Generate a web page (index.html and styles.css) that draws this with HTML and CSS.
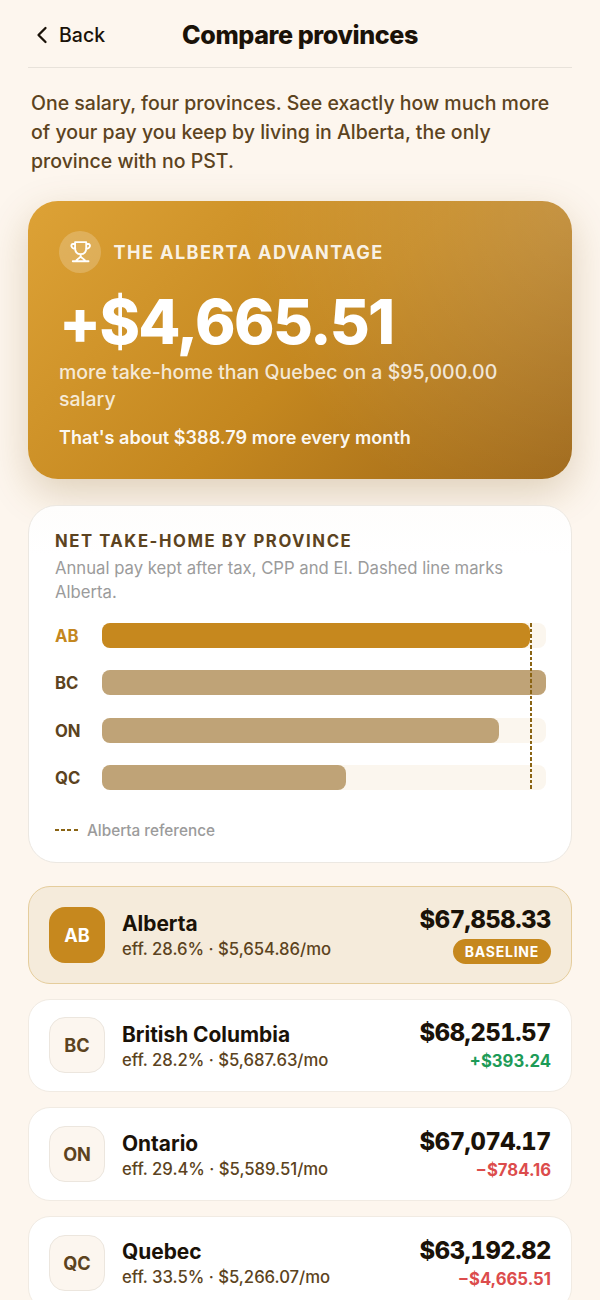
FILE: index.html
```html
<!DOCTYPE html>
<html lang="en">
<head>
<meta charset="utf-8">
<title>Compare provinces</title>
<link rel="stylesheet" href="styles.css">
</head>
<body>
<main class="screen">
  <header class="topbar">
    <div class="back"><svg class="chevron" viewBox="0 0 12 18"><path d="M9.500 2 2.500 9l7 7"/></svg><span>Back</span></div>
    <h1 class="title">Compare provinces</h1>
  </header>
  <p class="intro">One salary, four provinces. See exactly how much more<br>of your pay you keep by living in Alberta, the only<br>province with no PST.</p>

  <section class="hero">
    <div class="hero-head">
      <span class="trophy"><svg viewBox="0 0 24 24"><path d="M6.800 3h10.700v5.800c0 3.500-2 5.700-5.350 5.700S6.800 12.300 6.800 8.800zM6.800 4.800H4.700c-2.200 0-2.200 4.600 2.300 4.600M17.500 4.800h2.100c2.200 0 2.200 4.600-2.300 4.600M12.150 14.500v1.800M7.600 21.400c.3-2.600 4.550-2.900 4.550-5.100 0 2.200 4.250 2.500 4.550 5.100M4.600 21.400h15.100"/></svg></span>
      <span class="hero-label">THE ALBERTA ADVANTAGE</span>
    </div>
    <div class="hero-amount">+$4,665.51</div>
    <p class="hero-sub">more take-home than Quebec on a $95,000.00<br>salary</p>
    <p class="hero-month">That's about $388.79 more every month</p>
  </section>

  <section class="chart">
    <h2 class="chart-title">NET TAKE-HOME BY PROVINCE</h2>
    <p class="chart-sub">Annual pay kept after tax, CPP and EI. Dashed line marks<br>Alberta.</p>
    <div class="plot">
      <div class="codes"><span class="code active">AB</span><span class="code">BC</span><span class="code">ON</span><span class="code">QC</span></div>
      <div class="bars">
        <div class="track"><div class="fill active" style="width:96.5%"></div></div>
        <div class="track"><div class="fill" style="width:100%"></div></div>
        <div class="track"><div class="fill" style="width:89.5%"></div></div>
        <div class="track"><div class="fill" style="width:55%"></div></div>
        <div class="marker" style="left:96.5%"></div>
      </div>
    </div>
    <div class="legend"><span class="dash"></span><span>Alberta reference</span></div>
  </section>

  <section class="list">
    <article class="row base">
      <span class="badge">AB</span>
      <div class="info"><div class="name">Alberta</div><div class="detail">eff. 28.6% · $5,654.86/mo</div></div>
      <div class="figures"><div class="net">$67,858.33</div><div class="pill">BASELINE</div></div>
    </article>
    <article class="row">
      <span class="badge">BC</span>
      <div class="info"><div class="name">British Columbia</div><div class="detail">eff. 28.2% · $5,687.63/mo</div></div>
      <div class="figures"><div class="net">$68,251.57</div><div class="delta up">+$393.24</div></div>
    </article>
    <article class="row">
      <span class="badge">ON</span>
      <div class="info"><div class="name">Ontario</div><div class="detail">eff. 29.4% · $5,589.51/mo</div></div>
      <div class="figures"><div class="net">$67,074.17</div><div class="delta down">−$784.16</div></div>
    </article>
    <article class="row">
      <span class="badge">QC</span>
      <div class="info"><div class="name">Quebec</div><div class="detail">eff. 33.5% · $5,266.07/mo</div></div>
      <div class="figures"><div class="net">$63,192.82</div><div class="delta down">−$4,665.51</div></div>
    </article>
  </section>
</main>
</body>
</html>
```

FILE: styles.css
```css
* { box-sizing: border-box; margin: 0; padding: 0; }
html { background: #fdf6ee; }
body { height: 1300px; overflow: hidden; font-family: Inter, "Liberation Sans", sans-serif; color: #1a1208; white-space: nowrap; }
.screen { padding: 0 28px; }

.topbar { display: grid; grid-template-columns: 1fr auto 1fr; align-items: center; height: 68px; padding-top: 3px; border-bottom: 1px solid #e8e2da; }
.back { display: flex; align-items: center; gap: 11px; padding-left: 8px; font-size: 19.5px; font-weight: 500; }
.chevron { width: 12px; height: 18px; fill: none; stroke: #1a1208; stroke-width: 2.3; stroke-linecap: round; stroke-linejoin: round; }
.title { font-size: 25.1px; font-weight: 800; letter-spacing: -0.4px; }

.intro { padding: 20.5px 3px 0; font-size: 19.5px; line-height: 29.2px; font-weight: 500; color: #5c4320; }

.hero { height: 278px; margin-top: 24.5px; padding: 30px 31px; border-radius: 30px; color: #fff;
  background: radial-gradient(circle at 100% 0, rgba(255,255,255,.17), rgba(255,255,255,0) 330px), linear-gradient(135deg, #dda236 0%, #c4871f 53%, #9f6819 100%);
  box-shadow: 0 14px 40px rgba(122,82,15,.23); }
.hero-head { display: flex; align-items: center; gap: 12.5px; height: 42px; }
.trophy { display: flex; align-items: center; justify-content: center; width: 42px; height: 42px; border-radius: 50%; background: rgba(255,255,255,.2); }
.trophy svg { width: 25px; height: 25px; fill: none; stroke: #fff; stroke-width: 1.8; stroke-linecap: round; stroke-linejoin: round; }
.hero-label { font-size: 18.1px; font-weight: 700; letter-spacing: 1.4px; color: rgba(255,255,255,.9); }
.hero-amount { margin-top: 14px; height: 70px; line-height: 70px; font-size: 61.4px; font-weight: 800; letter-spacing: -1.65px; }
.hero-sub { margin-top: 2px; font-size: 19.5px; line-height: 27.2px; font-weight: 500; color: rgba(255,255,255,.82); }
.hero-month { margin-top: 11px; font-size: 18.1px; line-height: 26px; font-weight: 600; color: rgba(255,255,255,.96); }

.chart { height: 358px; margin-top: 26px; padding: 23px 26px 0; border: 1px solid #ece8e2; border-radius: 28px; background: linear-gradient(#fefdfc, #fff 50px); }
.chart-title { font-size: 16.7px; line-height: 24px; font-weight: 700; letter-spacing: 1.55px; color: #5c4320; }
.chart-sub { margin-top: 3px; font-size: 16.7px; line-height: 24px; color: #9b9b9b; }
.plot { display: grid; grid-template-columns: 47px 443.5px; height: 167.500px; margin-top: 19px; }
.codes, .bars { display: flex; flex-direction: column; justify-content: space-between; }
.code { height: 25px; line-height: 26.6px; font-size: 16.7px; font-weight: 700; color: #5c4320; }
.code.active { color: #c4871f; }
.bars { position: relative; }
.track { height: 25px; border-radius: 8px; background: #fbf6ee; }
.fill { height: 100%; border-radius: 8px; background: #bfa377; }
.fill.active { background: #c6881e; }
.marker { position: absolute; top: 0; bottom: 0; width: 2px; background: repeating-linear-gradient(#8a6414 0 3.6px, transparent 3.6px 5.6px); }
.legend { display: flex; align-items: center; gap: 9px; height: 24px; margin-top: 28px; font-size: 15.3px; font-weight: 500; color: #9b9b9b; }
.dash { width: 23px; height: 2px; background: repeating-linear-gradient(90deg, #8a6414 0 4px, transparent 4px 6.2px); }

.list { display: flex; flex-direction: column; gap: 15px; margin-top: 23px; }
.row { display: flex; align-items: center; height: 93.7px; flex: none; padding: 0 20px; border: 1px solid #f1ebe3; border-radius: 22px; background: #fff; }
.row.base { height: 98px; border: 1.4px solid #e5cd9c; background: #f5ebdb; }
.badge { display: flex; align-items: center; justify-content: center; width: 56px; height: 56px; border: 1.4px solid #ece6de; border-radius: 16px; background: #fcf6ef; font-size: 18.1px; font-weight: 700; color: #5c4320; }
.base .badge { border: 0; background: #c6881e; color: #fff; }
.info { flex: 1; padding: 4px 0 0 17px; }
.name { font-size: 20.9px; line-height: 26px; font-weight: 700; }
.detail { font-size: 16.7px; line-height: 25px; font-weight: 500; letter-spacing: -.02px; color: #5c4320; }
.figures { display: flex; flex-direction: column; align-items: flex-end; padding-top: 1.5px; }
.base .figures { padding-top: 0; }
.net { font-size: 23.7px; line-height: 30px; font-weight: 800; letter-spacing: -0.4px; font-variant-numeric: tabular-nums; }
.delta { font-size: 16.7px; line-height: 26px; font-weight: 700; }
.up { color: #1d9b57; }
.down { color: #dc4c4c; }
.pill { height: 25px; line-height: 25px; margin-top: 4px; padding: 0 12px; border-radius: 13px; background: #c6881e; color: #fff; font-size: 14px; font-weight: 700; letter-spacing: .75px; }
```
